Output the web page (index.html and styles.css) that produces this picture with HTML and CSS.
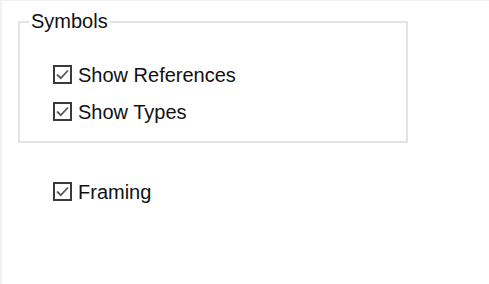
FILE: index.html
```html
<!DOCTYPE html>
<html lang="en">
<head>
    <meta charset="UTF-8" />
    <title>Options</title>
    <link rel="stylesheet" href="styles.css">
</head>
<body>
    <div class="panel">
        <fieldset class="group">
            <legend>Symbols</legend>
            <div class="options">
                <label class="option">
                    <span class="check">
                        <svg width="19" height="19" viewBox="0 0 19 19"><rect x="1" y="1" width="17" height="17" fill="#fff" stroke="#3a3a3a" stroke-width="2"/><path d="M4 9.5 L7.8 13.2 L15 5.5" fill="none" stroke="#5a5a5a" stroke-width="1.8"/></svg>
                    </span>
                    Show References
                </label>
                <label class="option">
                    <span class="check">
                        <svg width="19" height="19" viewBox="0 0 19 19"><rect x="1" y="1" width="17" height="17" fill="#fff" stroke="#3a3a3a" stroke-width="2"/><path d="M4 9.5 L7.8 13.2 L15 5.5" fill="none" stroke="#5a5a5a" stroke-width="1.8"/></svg>
                    </span>
                    Show Types
                </label>
            </div>
        </fieldset>

        <label class="option framing">
            <span class="check">
                <svg width="19" height="19" viewBox="0 0 19 19"><rect x="1" y="1" width="17" height="17" fill="#fff" stroke="#3a3a3a" stroke-width="2"/><path d="M4 9.5 L7.8 13.2 L15 5.5" fill="none" stroke="#5a5a5a" stroke-width="1.8"/></svg>
            </span>
            Framing
        </label>
    </div>
</body>
</html>
```

FILE: styles.css
```css
* {
    box-sizing: border-box;
}

body {
    margin: 0;
    font-family: "Liberation Sans", Arial, sans-serif;
    font-size: 20px;
    line-height: 23px;
    color: #111;
    background-color: #fff;
}

.panel {
    height: 284px;
    border-top: 1px solid #f0f0f0;
    border-left: 2px solid #f2f2f2;
    padding-left: 16px;
}

.group {
    width: 390px;
    margin: 9px 0 0 0;
    padding: 0 0 17px 0;
    border: 2px solid #e3e3e3;
}

.group legend {
    margin-left: 9px;
    padding: 0 2px;
}

.options {
    margin: 31px 0 0 33px;
    display: flex;
    flex-direction: column;
    gap: 14px;
}

.option {
    display: flex;
    align-items: flex-start;
    gap: 6px;
}

.check {
    display: flex;
    flex-shrink: 0;
    margin-top: 1px;
}

.check svg {
    display: block;
}

.framing {
    margin: 38px 0 0 35px;
}
```
